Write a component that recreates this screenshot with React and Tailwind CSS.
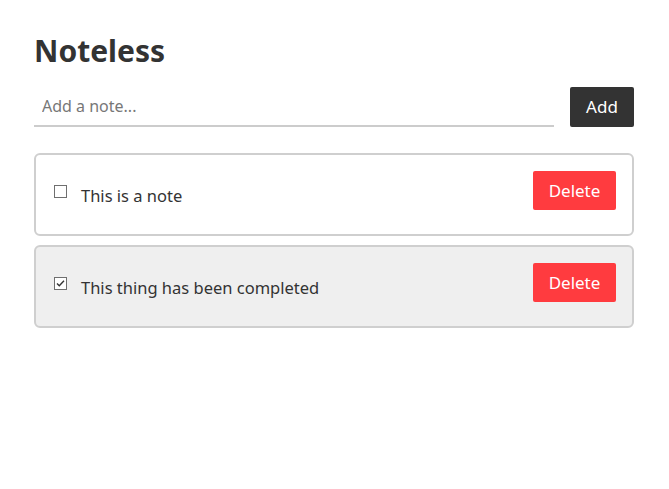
import React, { useState } from 'react'

const initialNotes = [
  { id: 1, text: 'This is a note', done: false },
  { id: 2, text: 'This thing has been completed', done: true },
]

const CheckBox = ({ checked, onChange }) => (
  <button
    onClick={onChange}
    className="w-[13px] h-[13px] mt-[1px] ml-[2px] mr-[14px] border border-[#6f6f6f] bg-white flex items-center justify-center shrink-0"
  >
    {checked && (
      <svg width="9" height="9" viewBox="0 0 9 9">
        <path d="M1 4.5 L3.3 6.8 L8 1.8" fill="none" stroke="#333" strokeWidth="1.4" />
      </svg>
    )}
  </button>
)

const NoteCard = ({ note, onToggle, onDelete }) => (
  <div
    className={`flex justify-between items-start rounded-md border-2 border-[#cfcfcf] pt-4 pb-6 pl-4 pr-4 ${
      note.done ? 'bg-[#efefef]' : 'bg-white'
    }`}
  >
    <div className="flex items-start pt-[13px]">
      <CheckBox checked={note.done} onChange={() => onToggle(note.id)} />
      <span className="text-[16.5px] leading-[22px] text-[#333] mt-[1px]">{note.text}</span>
    </div>
    <button
      onClick={() => onDelete(note.id)}
      className="w-[83px] h-[39px] rounded-[2px] bg-[#ff3b3f] text-white text-[17px]"
    >
      Delete
    </button>
  </div>
)

export default function App() {
  const [notes, setNotes] = useState(initialNotes)
  const [text, setText] = useState('')

  const addNote = () => {
    if (!text.trim()) return
    setNotes([...notes, { id: Date.now(), text, done: false }])
    setText('')
  }

  return (
    <div
      className="min-h-screen bg-white pl-[34px] pr-[35px] pt-[31px] text-[#333]"
      style={{ fontFamily: '"Segoe UI", "Noto Sans", sans-serif' }}
    >
      <h1 className="text-[30px] font-bold leading-[40px] text-[#333]">Noteless</h1>
      <div className="flex items-end gap-4 mt-[16px]">
        <input
          value={text}
          onChange={(e) => setText(e.target.value)}
          placeholder="Add a note..."
          className="flex-1 h-[40px] px-2 text-[16px] border-b-2 border-[#cccccc] outline-none placeholder:text-[#777]"
        />
        <button
          onClick={addNote}
          className="w-[64px] h-[40px] rounded-[2px] bg-[#333] text-white text-[17px]"
        >
          Add
        </button>
      </div>
      <div className="flex flex-col gap-[9px] mt-[26px]">
        {notes.map((note) => (
          <NoteCard
            key={note.id}
            note={note}
            onToggle={(id) =>
              setNotes(notes.map((n) => (n.id === id ? { ...n, done: !n.done } : n)))
            }
            onDelete={(id) => setNotes(notes.filter((n) => n.id !== id))}
          />
        ))}
      </div>
    </div>
  )
}
